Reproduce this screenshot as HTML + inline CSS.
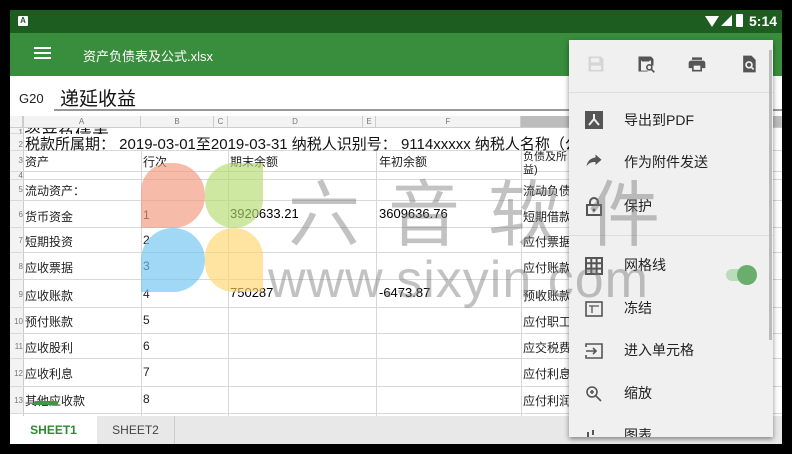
<!DOCTYPE html>
<html><head><meta charset="utf-8"><style>
*{margin:0;padding:0;box-sizing:border-box}
body{width:792px;height:454px;background:#000;position:relative;overflow:hidden;font-family:"Liberation Sans","Noto Sans CJK SC",sans-serif}
.a{position:absolute}
#scr{left:10px;top:10px;width:772px;height:434px;background:#fff;overflow:hidden}
.cell{position:absolute;font-size:12px;color:#222;white-space:nowrap}
.num{font-size:13px;color:#000}
.hl{position:absolute;background:#d8d8d8;height:1px}
.vl{position:absolute;background:#d8d8d8;width:1px}
.rn{position:absolute;left:0;width:13px;font-size:8px;color:#777;text-align:right;background:#f3f3f3}
.ch{position:absolute;top:106px;height:11px;font-size:8px;color:#777;text-align:center;line-height:11px;background:#f3f3f3;border-right:1px solid #ccc}
.mi{position:absolute;left:55px;font-size:14px;color:#222}
.ic{position:absolute;left:16px}
</style></head><body>
<div id="scr" class="a">
 <div class="a" style="left:0;top:0;width:772px;height:23px;background:#1d5e20"></div>
 <div class="a" style="left:8px;top:6px;width:10px;height:10px;background:#fff;border-radius:1px;font-size:8px;font-weight:bold;color:#1d5e20;text-align:center;line-height:10px">A</div>
 <div class="a" style="left:695px;top:6px;width:0;height:0;border-left:7px solid transparent;border-right:7px solid transparent;border-top:11px solid #fff"></div>
 <div class="a" style="left:711px;top:5px;width:0;height:0;border-left:11px solid transparent;border-bottom:11px solid #fff"></div>
 <div class="a" style="left:726px;top:4px;width:7px;height:13px;background:#fff;border-radius:1px"></div>
 <div class="a" style="left:739px;top:3px;color:#fff;font-size:14px;font-weight:bold">5:14</div>
 <div class="a" style="left:0;top:23px;width:772px;height:43px;background:#388e3c"></div>
 <div class="a" style="left:24px;top:37px;width:17px;height:2px;background:#fff;box-shadow:0 5px 0 #fff,0 10px 0 #fff"></div>
 <div class="a" style="left:73px;top:36px;color:#fff;font-size:13px">资产负债表及公式.xlsx</div>
 <div class="a" style="left:9px;top:81px;font-size:13px;color:#222">G20</div>
 <div class="a" style="left:50px;top:74px;font-size:19px;color:#111">递延收益</div>
 <div class="a" style="left:44px;top:99px;width:728px;height:2px;background:#999"></div>
 <!-- grid -->
 <div class="a" style="left:0;top:106px;width:772px;height:310px;background:#fff"></div>
 <div class="ch" style="left:0;width:13px"></div>
 <div class="ch" style="left:13px;width:118px">A</div>
 <div class="ch" style="left:131px;width:73px">B</div>
 <div class="ch" style="left:204px;width:14px">C</div>
 <div class="ch" style="left:218px;width:135px">D</div>
 <div class="ch" style="left:353px;width:13px">E</div>
 <div class="ch" style="left:366px;width:145px">F</div>
 <div class="ch" style="left:511px;width:261px;background:#bcbcbc"></div>
 <div class="vl" style="left:13px;top:106px;height:310px;background:#ccc"></div>
 <div class="vl" style="left:131px;top:138px;height:278px"></div>
 <div class="vl" style="left:218px;top:138px;height:278px"></div>
 <div class="vl" style="left:366px;top:138px;height:278px"></div>
 <div class="vl" style="left:511px;top:138px;height:278px"></div>
 <div class="hl" style="left:0;top:117px;width:772px;background:#ccc"></div>
 <div class="hl" style="left:0;top:123px;width:13px"></div>
 <div class="hl" style="left:0;top:140px;width:772px"></div>
 <div class="hl" style="left:0;top:161px;width:772px"></div>
 <div class="hl" style="left:0;top:169px;width:772px"></div>
 <div class="hl" style="left:0;top:190px;width:772px"></div>
 <div class="hl" style="left:0;top:217px;width:772px"></div>
 <div class="hl" style="left:0;top:242px;width:772px"></div>
 <div class="hl" style="left:0;top:269px;width:772px"></div>
 <div class="hl" style="left:0;top:297px;width:772px"></div>
 <div class="hl" style="left:0;top:323px;width:772px"></div>
 <div class="hl" style="left:0;top:348px;width:772px"></div>
 <div class="hl" style="left:0;top:376px;width:772px"></div>
 <div class="hl" style="left:0;top:403px;width:772px"></div>
 <div class="rn" style="top:118px;height:5px;line-height:10px">1</div>
 <div class="rn" style="top:124px;height:16px;line-height:22px">2</div>
 <div class="rn" style="top:141px;height:20px;line-height:20px">3</div>
 <div class="rn" style="top:162px;height:7px;line-height:8px">4</div>
 <div class="rn" style="top:170px;height:20px;line-height:20px">5</div>
 <div class="rn" style="top:191px;height:26px;line-height:28px">6</div>
 <div class="rn" style="top:218px;height:24px;line-height:26px">7</div>
 <div class="rn" style="top:243px;height:26px;line-height:28px">8</div>
 <div class="rn" style="top:270px;height:27px;line-height:30px">9</div>
 <div class="rn" style="top:298px;height:25px;line-height:27px">10</div>
 <div class="rn" style="top:324px;height:24px;line-height:26px">11</div>
 <div class="rn" style="top:349px;height:27px;line-height:29px">12</div>
 <div class="rn" style="top:377px;height:26px;line-height:28px">13</div>
 <div class="a" style="left:14px;top:118px;width:500px;height:6px;overflow:hidden"><div style="font-size:17px;margin-top:-8px;color:#111">资产负债表</div></div>
 <div class="cell" style="left:15px;top:123px;font-size:15px;color:#111">税款所属期： 2019-03-01至2019-03-31 纳税人识别号： 9114xxxxx 纳税人名称（公章）：</div>
 <div class="cell" style="left:15px;top:143px">资产</div>
 <div class="cell" style="left:133px;top:143px">行次</div>
 <div class="cell" style="left:220px;top:143px">期末余额</div>
 <div class="cell" style="left:369px;top:143px">年初余额</div>
 <div class="cell" style="left:513px;top:141px;line-height:13px;font-size:11px">负债及所<br>益)</div>
 <div class="cell" style="left:15px;top:172px">流动资产：</div><div class="cell" style="left:513px;top:172px">流动负债</div>
 <div class="cell" style="left:15px;top:198px">货币资金</div><div class="cell" style="left:133px;top:198px">1</div><div class="cell num" style="left:220px;top:196px">3920633.21</div><div class="cell num" style="left:369px;top:196px">3609636.76</div><div class="cell" style="left:513px;top:198px">短期借款</div>
 <div class="cell" style="left:15px;top:223px">短期投资</div><div class="cell" style="left:133px;top:223px">2</div><div class="cell" style="left:513px;top:223px">应付票据</div>
 <div class="cell" style="left:15px;top:249px">应收票据</div><div class="cell" style="left:133px;top:249px">3</div><div class="cell" style="left:513px;top:249px">应付账款</div>
 <div class="cell" style="left:15px;top:277px">应收账款</div><div class="cell" style="left:133px;top:277px">4</div><div class="cell num" style="left:220px;top:275px">750287</div><div class="cell num" style="left:369px;top:275px">-6473.87</div><div class="cell" style="left:513px;top:277px">预收账款</div>
 <div class="cell" style="left:15px;top:303px">预付账款</div><div class="cell" style="left:133px;top:303px">5</div><div class="cell" style="left:513px;top:303px">应付职工</div>
 <div class="cell" style="left:15px;top:329px">应收股利</div><div class="cell" style="left:133px;top:329px">6</div><div class="cell" style="left:513px;top:329px">应交税费</div>
 <div class="cell" style="left:15px;top:355px">应收利息</div><div class="cell" style="left:133px;top:355px">7</div><div class="cell" style="left:513px;top:355px">应付利息</div>
 <div class="cell" style="left:15px;top:382px">其他应收款</div><div class="cell" style="left:133px;top:382px">8</div><div class="cell" style="left:513px;top:382px">应付利润</div>
 <div class="a" style="left:24px;top:391px;width:24px;height:4px;background:#3a9a3e;border-radius:2px"></div>
 <!-- blobs -->
 <div class="a" style="left:131px;top:153px;width:64px;height:65px;background:rgba(243,150,125,.65);border-radius:28px 32px 32px 0"></div>
 <div class="a" style="left:195px;top:153px;width:58px;height:65px;background:rgba(180,218,110,.65);border-radius:32px 0 32px 32px"></div>
 <div class="a" style="left:131px;top:218px;width:64px;height:64px;background:rgba(110,195,240,.65);border-radius:32px 32px 32px 0"></div>
 <div class="a" style="left:195px;top:218px;width:58px;height:64px;background:rgba(253,212,110,.65);border-radius:32px 32px 0 32px"></div>
 <!-- tabs -->
 <div class="a" style="left:0;top:406px;width:772px;height:28px;background:#e8e8e8"></div>
 <div class="a" style="left:0;top:406px;width:87px;height:28px;background:#fff;color:#2e8b32;font-size:12px;font-weight:bold;text-align:center;line-height:28px">SHEET1</div>
 <div class="a" style="left:87px;top:406px;width:78px;height:28px;color:#444;font-size:12px;text-align:center;line-height:28px;border-right:1px solid #ccc">SHEET2</div>
 <!-- menu -->
 <div class="a" style="left:559px;top:30px;width:204px;height:397px;background:#f0f0f0;box-shadow:0 2px 5px rgba(0,0,0,.45)">
  <svg class="a" style="left:17px;top:14px" width="20" height="20" viewBox="0 0 24 24"><path d="M3 3h15l3 3v15H3z" fill="#d6d6d6"/><rect x="6" y="5" width="10" height="5" fill="#f0f0f0"/><rect x="6" y="14" width="12" height="5" fill="#f0f0f0"/></svg>
  <svg class="a" style="left:67px;top:14px" width="20" height="20" viewBox="0 0 24 24"><path d="M3 3h15l3 3v8h-3v-6H6v12h8v1H3z" fill="#555"/><rect x="7" y="4" width="9" height="5" fill="#555"/><circle cx="16" cy="16" r="3" fill="none" stroke="#555" stroke-width="2"/><path d="M18 18l4 4" stroke="#555" stroke-width="2"/></svg>
  <svg class="a" style="left:118px;top:14px" width="20" height="20" viewBox="0 0 24 24"><path d="M19 8H5c-1.7 0-3 1.3-3 3v6h4v4h12v-4h4v-6c0-1.700-1.300-3-3-3zm-3 11H8v-5h8v5zm2-15H6v3h12z" fill="#555"/></svg>
  <svg class="a" style="left:170px;top:14px" width="20" height="20" viewBox="0 0 24 24"><path d="M5 2h10l5 5v15H5z" fill="#555"/><circle cx="12" cy="13" r="3.5" fill="none" stroke="#f0f0f0" stroke-width="2"/><path d="M14.5 15.5l3 3" stroke="#f0f0f0" stroke-width="2"/></svg>
  <div class="a" style="left:0;top:52px;width:204px;height:1px;background:#ddd"></div>
  <div class="ic" style="top:71px;width:18px;height:18px;background:#555"><svg width="18" height="18" viewBox="0 0 18 18"><path d="M9 3v5M9 8l-5 6M9 8l5 6" stroke="#f0f0f0" stroke-width="2" fill="none"/></svg></div>
  <div class="mi" style="top:70px">导出到PDF</div>
  <svg class="ic" style="top:113px" width="18" height="18" viewBox="0 0 24 24"><path d="M14 6V2l8 7-8 7v-4c-5 0-9 1-12 6 1-6 4-11 12-12z" fill="#555"/></svg>
  <div class="mi" style="top:112px">作为附件发送</div>
  <svg class="ic" style="top:156px" width="18" height="20" viewBox="0 0 18 20"><path d="M5 9V6a4 4 0 0 1 8 0v3" fill="none" stroke="#555" stroke-width="2"/><rect x="2" y="9" width="14" height="10" fill="none" stroke="#555" stroke-width="2"/><circle cx="9" cy="14" r="1.5" fill="#555"/></svg>
  <div class="mi" style="top:156px">保护</div>
  <div class="a" style="left:0;top:195px;width:204px;height:1px;background:#ddd"></div>
  <svg class="ic" style="top:217px" width="18" height="18" viewBox="0 0 18 18"><path d="M1 1h16v16H1zM6.3 1v16M11.6 1v16M1 6.3h16M1 11.6h16" fill="none" stroke="#555" stroke-width="2"/></svg>
  <div class="mi" style="top:215px">网格线</div>
  <div class="a" style="left:157px;top:229px;width:28px;height:12px;background:#b9dcbb;border-radius:6px"></div>
  <div class="a" style="left:168px;top:225px;width:20px;height:20px;background:#6aae6d;border-radius:50%"></div>
  <svg class="ic" style="top:261px" width="18" height="16" viewBox="0 0 18 16"><rect x="1" y="1" width="16" height="14" fill="none" stroke="#555" stroke-width="1.6"/><path d="M4 5h10M7 5v7" stroke="#555" stroke-width="1.3"/></svg>
  <div class="mi" style="top:258px">冻结</div>
  <svg class="ic" style="top:303px" width="18" height="16" viewBox="0 0 18 16"><path d="M1 4V1h16v14H1v-3" fill="none" stroke="#555" stroke-width="1.6"/><path d="M1 8h10M8 5l3 3-3 3" fill="none" stroke="#555" stroke-width="1.6"/></svg>
  <div class="mi" style="top:300px">进入单元格</div>
  <svg class="ic" style="top:345px" width="18" height="18" viewBox="0 0 18 18"><circle cx="7" cy="7" r="5" fill="none" stroke="#555" stroke-width="1.6"/><path d="M11 11l5 5M5 7h4M7 5v4" stroke="#555" stroke-width="1.6"/></svg>
  <div class="mi" style="top:343px">缩放</div>
  <div class="a" style="left:18px;top:392px;width:2px;height:5px;background:#555;box-shadow:5px -2px 0 #555"></div>
  <div class="mi" style="top:385px;height:12px;overflow:hidden"><div>图表</div></div>
  <div class="a" style="left:200px;top:10px;width:3px;height:290px;background:#bbb"></div>
 </div>
 <!-- watermark on top -->
 <div class="a" style="left:278px;top:146px;font-size:72px;color:rgba(120,120,120,.45);letter-spacing:28px;white-space:nowrap">六音软件</div>
 <div class="a" style="left:258px;top:240px;font-size:52px;color:rgba(120,120,120,.45);white-space:nowrap;letter-spacing:1px">www.sixyin.com</div>
</div>
</body></html>
